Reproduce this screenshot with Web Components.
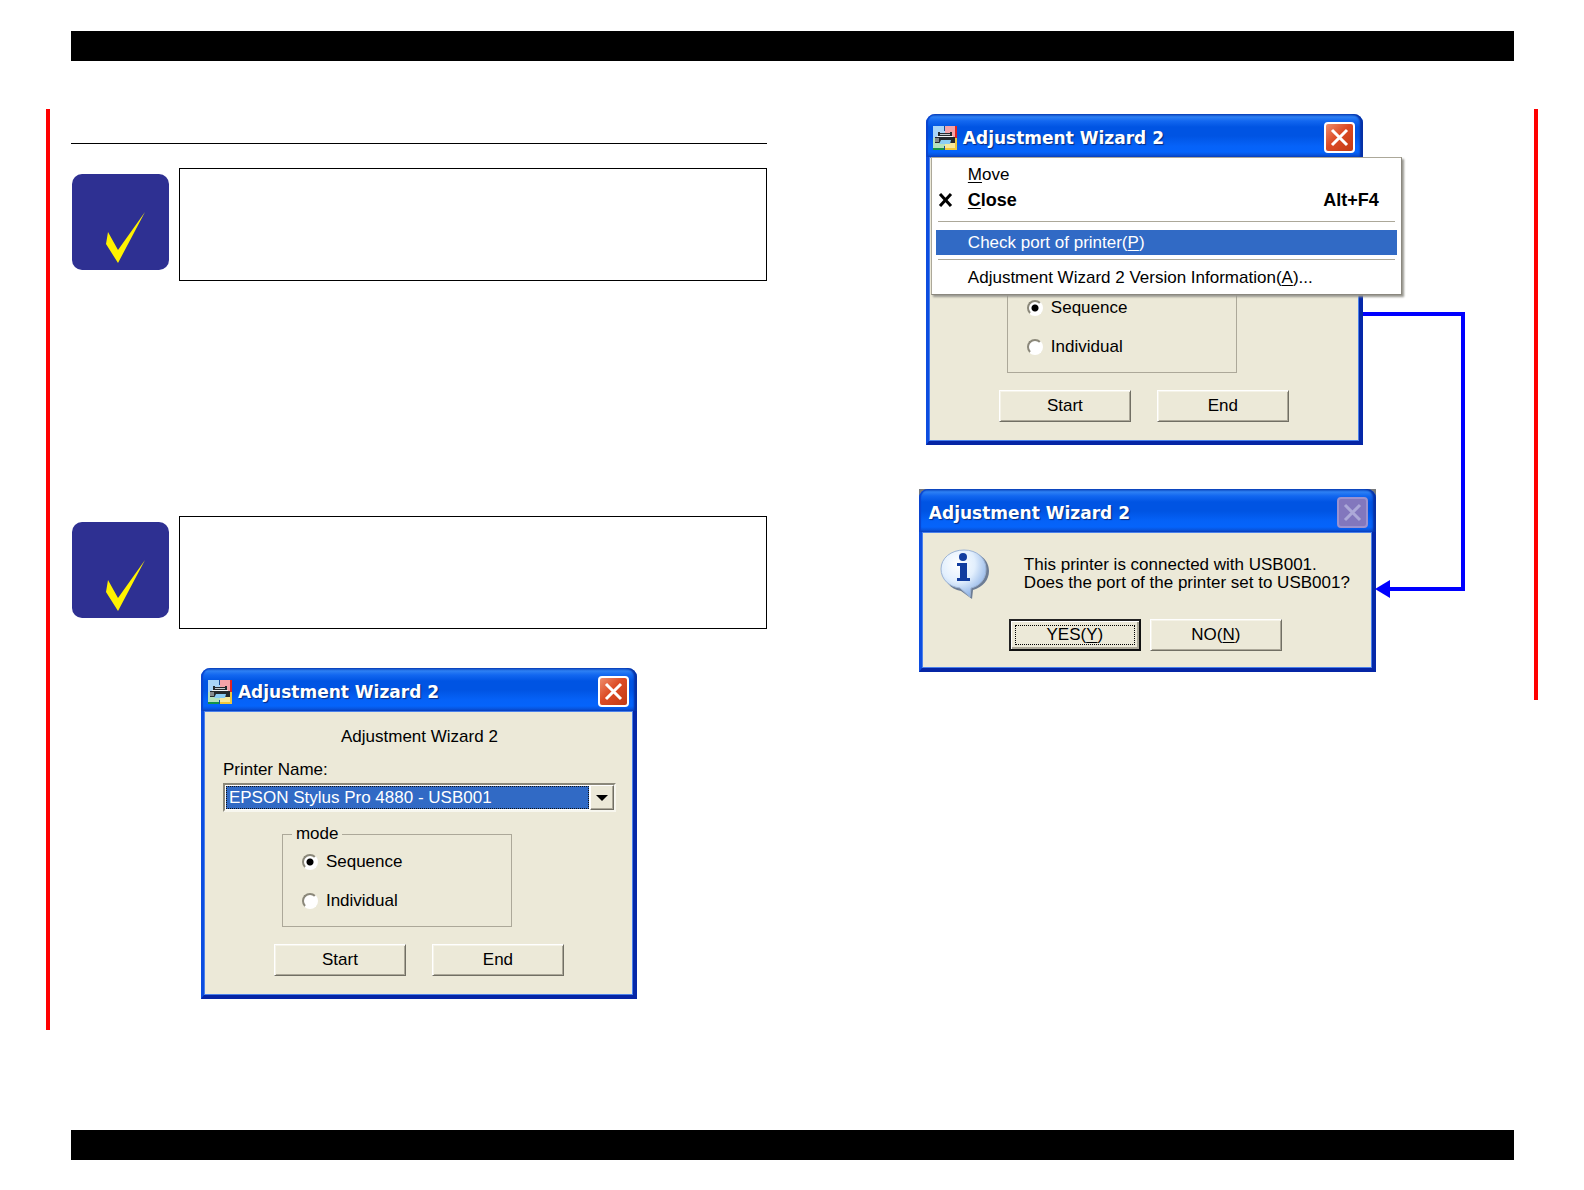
<!DOCTYPE html>
<html lang="en">
<head>
<meta charset="utf-8">
<title>Adjustment Wizard 2</title>
<style>
  body { margin: 0; background: #fff; color: #000; font: 17px/20px "Liberation Sans", Arial, sans-serif; }
</style>
</head>
<body>
<manual-page></manual-page>

<template id="t-page">
  <style>
    :host { display: flex; flex-direction: column; min-height: 100vh; }
    .band { height: 30px; background: #000; margin: 31px 70px 0 71px; }
    .band.end { margin: auto 70px 30px 71px; }
    main { display: grid; grid-template-columns: 717fr 767fr; align-items: start; padding: 48px 46px 0; }
    .left { border-left: 4px solid #f00; padding: 34px 0 31px 21px; display: flex; flex-direction: column; }
    .right { border-right: 4px solid #f00; padding: 5px 0 28px 152px; }
    hr { border: 0; height: 1px; background: #000; margin: 0 0 24px; width: 100%; }
    .left manual-note + manual-note { margin-top: 235px; }
    .left xp-window { align-self: center; width: 436px; margin-top: 39px; }
    .flow { position: relative; width: 457px; display: flex; flex-direction: column; gap: 44px; }
    .flow .parent { width: 437px; margin-left: 7px; }
    .link { position: absolute; left: 444px; top: 198px; }
    system-menu { position: absolute; left: 5px; top: 43px; }
  </style>
  <header class="band"></header>
  <main>
    <section class="left">
      <hr>
      <manual-note></manual-note>
      <manual-note></manual-note>
      <xp-window><app-icon slot="icon"></app-icon><span slot="title">Adjustment Wizard 2</span><wizard-form></wizard-form></xp-window>
    </section>
    <section class="right">
      <div class="flow">
        <xp-window class="parent"><app-icon slot="icon"></app-icon><span slot="title">Adjustment Wizard 2</span><wizard-form covered></wizard-form><system-menu></system-menu></xp-window>
        <xp-window inactive><span slot="title">Adjustment Wizard 2</span><port-message></port-message></xp-window>
        <svg class="link" width="102" height="287" viewBox="0 0 102 287" aria-hidden="true">
          <path d="M0 2H100V277H26" fill="none" stroke="#00f" stroke-width="4"/>
          <path d="M12 277L27 268V286Z" fill="#00f"/>
        </svg>
      </div>
    </section>
  </main>
  <footer class="band end"></footer>
</template>

<template id="t-note">
  <style>
    :host { display: flex; gap: 10px; padding-left: 1px; }
    svg { margin-top: 6px; flex: none; }
    .frame { flex: 1; min-height: 111px; border: 1px solid #000; }
  </style>
  <svg width="97" height="96" viewBox="0 0 97 96" aria-hidden="true">
    <rect width="97" height="96" rx="10" fill="#2e3092"/>
    <path d="M36 58L46 76L73 38L46 89L34 70Z" fill="#fff200"/>
  </svg>
  <div class="frame"></div>
</template>

<template id="t-icon">
  <style>:host { display: block; width: 24px; height: 24px; } svg { display: block; }</style>
  <svg width="24" height="24" viewBox="0 0 24 24" aria-hidden="true">
    <path d="M0 0H12V12H0Z" fill="#a9d5f7"/><path d="M12 0H24V12H12Z" fill="#f5a3a8"/>
    <path d="M0 12H12V24H0Z" fill="#b5e2bd"/><path d="M12 12H24V24H12Z" fill="#f7e99b"/>
    <path d="M23 0V12" stroke="#e02420" stroke-width="2"/><path d="M0 23H12" stroke="#159447" stroke-width="2"/>
    <path d="M12 23H24M23 12V24" stroke="#efc83b" stroke-width="2"/><path d="M11.500 0V5M11.500 20V24" stroke="#174c96" stroke-width="1"/>
    <path d="M5 6H7V7H17V6H19V10H5Z" fill="#242a2e"/><path d="M7 8H17V9H7Z" fill="#c3cacd"/>
    <path d="M4 10H20V11H4Z" fill="#eef2f3"/>
    <path d="M2 11H22V17H2Z" fill="#24292c"/><path d="M2 12H6V16H2Z" fill="#858b8e"/>
    <path d="M8 14H18L17 18H6Z" fill="#8bcdf4"/>
  </svg>
</template>

<template id="t-window">
  <style>
    :host { display: block; position: relative; }
    :host([inactive]) { background: #77797c; }
    .bar { display: flex; align-items: center; box-sizing: border-box; height: 43px; padding: 4px 8px 0 7px; border-radius: 9px 9px 0 0;
      background: linear-gradient(#0c48bd 0, #2d80f4 3px, #1267f0 7px, #0054e3 13px, #0054e3 22px, #0562f8 32px, #0564fb 38px, #0a49c8 43px);
      box-shadow: inset 2px 0 1px #0a44cf, inset -3px 0 2px #0630a4; }
    h2 { flex: 1; margin: 0 0 0 6px; color: #fff; font: bold 17px/24px "DejaVu Sans", sans-serif; text-shadow: 1px 1px 1px #072a80; }
    :host([inactive]) h2 { margin-left: 3px; }
    .bar button { box-sizing: border-box; width: 31px; height: 31px; padding: 0; border: 2px solid #fff; border-radius: 4px; background: linear-gradient(135deg, #ee8d6d, #dc4b25 45%, #c23a14); }
    :host([inactive]) .bar button { background: #8277bd; border-color: #9b92cf; }
    .bar svg { display: block; margin: auto; stroke: #fff; }
    :host([inactive]) .bar svg { stroke: #aca9d8; }
    .body { border: solid #0831c4; border-width: 0 4px 4px 3px; border-left-color: #0c4de0; border-right-color: #0528a8; border-bottom-color: #0525a5; }
    .inner { border: 1px solid #4a80ea; background: #ece9d8; }
  </style>
  <div class="bar"><slot name="icon"></slot><h2><slot name="title"></slot></h2>
    <button type="button" aria-label="Close"><svg width="21" height="21" viewBox="0 0 21 21"><path d="M3 3L18 18M18 3L3 18" fill="none" stroke-width="3"/></svg></button></div>
  <div class="body"><div class="inner"><slot></slot></div></div>
</template>

<template id="t-button">
  <style>
    :host { display: block; }
    button { display: flex; align-items: center; justify-content: center; box-sizing: border-box; width: 132px; height: 32px; padding: 0; font: inherit; color: #000; background: #ece9d8;
      border: 1px solid; border-color: #fff #716f64 #716f64 #fff; box-shadow: inset 1px 1px #f5f3e8, inset -1px -1px #aca899; }
    :host([default]) button { border: 2px solid #000; border-color: #222 #111 #111 #222; box-shadow: inset 1px 1px #fff, inset -2px -2px #aca899; outline: 1px dotted #000; outline-offset: -7px; }
  </style>
  <button type="button"><span><slot></slot></span></button>
</template>

<template id="t-form">
  <style>
    :host { display: block; }
    form { display: flex; flex-direction: column; height: 282px; box-sizing: border-box; padding: 15px 16px 0 18px; }
    h3 { margin: 0; font: inherit; text-align: center; }
    .name { margin-top: 13px; }
    .combo { display: flex; box-sizing: border-box; height: 29px; border: 2px solid; border-color: #8b887a #f7f6ee #f7f6ee #8b887a; background: #fff; margin-top: 3px; }
    select { appearance: none; flex: 1; min-width: 0; margin: 1px; padding: 0 0 0 2px; border: 1px dotted #111; border-radius: 0; background: #316ac5; color: #fff; font: inherit; }
    .drop { width: 24px; display: grid; place-items: center; box-sizing: border-box; border: 1px solid; border-color: #fff #716f64 #716f64 #fff; box-shadow: inset -1px -1px #aca899; background: #ece9d8; }
    fieldset { box-sizing: border-box; width: 230px; height: 103px; margin: 12px 0 0 59px; padding: 8px 0 0 19px; border: 1px solid #aca899; }
    legend { padding: 0 4px; margin-left: -10px; }
    label.opt { display: flex; align-items: center; gap: 8px; height: 20px; }
    label.opt + label.opt { margin-top: 19px; }
    input { appearance: none; box-sizing: border-box; width: 16px; height: 16px; margin: 0; border: 2px solid; border-color: #8b887a #fff #fff #8b887a; border-radius: 50%; background: #fff; }
    input:checked { background: radial-gradient(circle, #000 0 3px, #fff 4px); }
    .actions { display: flex; gap: 26px; margin: 17px 0 0 51px; }
    :host([covered]) .top, :host([covered]) legend { visibility: hidden; }
  </style>
  <form>
    <div class="top"><h3>Adjustment Wizard 2</h3></div>
    <label class="name top" for="printer">Printer Name:</label>
    <div class="combo top"><select id="printer"><option>EPSON Stylus Pro 4880 - USB001</option></select>
      <span class="drop"><svg width="12" height="6" aria-hidden="true"><path d="M0 0H12L6 6Z"/></svg></span></div>
    <fieldset><legend>mode</legend>
      <label class="opt" for="seq"><input id="seq" type="radio" name="mode" checked>Sequence</label>
      <label class="opt" for="ind"><input id="ind" type="radio" name="mode">Individual</label>
    </fieldset>
    <div class="actions"><xp-button>Start</xp-button><xp-button>End</xp-button></div>
  </form>
</template>

<template id="t-menu">
  <style>
    :host { display: block; box-sizing: border-box; width: 471px; padding: 4px; background: #fff; border: 1px solid #aca899; border-right-color: #8b887f; border-bottom-color: #8b887f; box-shadow: 2px 2px 2px #999890; }
    button { display: flex; align-items: center; box-sizing: border-box; width: 100%; height: 25px; padding: 0 18px 0 0; border: 0; background: none; color: #000; font: inherit; text-align: left; white-space: nowrap; }
    .mark { width: 32px; flex: none; }
    .mark svg { display: block; margin-left: 2px; }
    .key { margin-left: auto; }
    .strong { font-size: 18px; font-weight: bold; }
    .on { background: #316ac5; color: #fff; }
    hr { border: 0; height: 1px; background: #aca899; margin: 4px 2px 5px; }
    hr.wide { margin-top: 9px; margin-bottom: 8px; }
    u { text-underline-offset: 2px; }
  </style>
  <div role="menu">
    <button type="button" role="menuitem"><span class="mark"></span><span><u>M</u>ove</span></button>
    <button type="button" role="menuitem" class="strong"><span class="mark"><svg width="15" height="14" viewBox="0 0 15 14"><path d="M2 1L13 13M13 1L2 13" stroke="#000" stroke-width="3"/></svg></span><span><u>C</u>lose</span><span class="key">Alt+F4</span></button>
    <hr class="wide">
    <button type="button" role="menuitem" class="on"><span class="mark"></span><span>Check port of printer(<u>P</u>)</span></button>
    <hr>
    <button type="button" role="menuitem"><span class="mark"></span><span>Adjustment Wizard 2 Version Information(<u>A</u>)...</span></button>
  </div>
</template>

<template id="t-message">
  <style>
    :host { display: flex; flex-direction: column; box-sizing: border-box; height: 134px; padding: 14px 0 0 17px; }
    .row { display: flex; gap: 34px; }
    p { margin: 9px 0 0; line-height: 18px; white-space: nowrap; }
    .actions { display: flex; gap: 9px; margin: 20px 0 0 69px; }
    u { text-underline-offset: 2px; }
  </style>
  <div class="row">
    <svg width="50" height="52" viewBox="0 0 50 52" aria-hidden="true">
      <defs><radialGradient id="g" cx=".38" cy=".3" r=".75"><stop offset="0" stop-color="#fff"/><stop offset=".5" stop-color="#e2effd"/><stop offset="1" stop-color="#86ade5"/></radialGradient></defs>
      <path d="M27 5C40 5 49 13 49 24C49 33 43 40 33 43L32 52L21 44C10 42 4 34 4 24C4 13 14 5 27 5Z" fill="#42577d" opacity=".75"/>
      <path d="M24 3C37 3 46 11 46 22C46 32 40 39 31 41L30 50L20 41C9 40 1 32 1 22C1 11 11 3 24 3Z" fill="url(#g)" stroke="#9db4d5"/>
      <circle cx="23" cy="10" r="4" fill="#123d9f"/>
      <path d="M17 16H27V31H30V34H17V31H20V19H17Z" fill="#123d9f"/>
    </svg>
    <p>This printer is connected with USB001.<br>Does the port of the printer set to USB001?</p>
  </div>
  <div class="actions"><xp-button default>YES(<u>Y</u>)</xp-button><xp-button>NO(<u>N</u>)</xp-button></div>
</template>

<script>
  function shadowFrom(host, id) {
    host.attachShadow({ mode: "open" }).append(document.getElementById(id).content.cloneNode(true));
  }
  class ManualNote extends HTMLElement { constructor() { super(); shadowFrom(this, "t-note"); } }
  class AppIcon extends HTMLElement { constructor() { super(); shadowFrom(this, "t-icon"); } }
  class XpWindow extends HTMLElement { constructor() { super(); shadowFrom(this, "t-window"); } }
  class XpButton extends HTMLElement { constructor() { super(); shadowFrom(this, "t-button"); } }
  class WizardForm extends HTMLElement { constructor() { super(); shadowFrom(this, "t-form"); } }
  class SystemMenu extends HTMLElement { constructor() { super(); shadowFrom(this, "t-menu"); } }
  class PortMessage extends HTMLElement { constructor() { super(); shadowFrom(this, "t-message"); } }
  class ManualPage extends HTMLElement { constructor() { super(); shadowFrom(this, "t-page"); } }
  customElements.define("manual-note", ManualNote);
  customElements.define("app-icon", AppIcon);
  customElements.define("xp-button", XpButton);
  customElements.define("xp-window", XpWindow);
  customElements.define("wizard-form", WizardForm);
  customElements.define("system-menu", SystemMenu);
  customElements.define("port-message", PortMessage);
  customElements.define("manual-page", ManualPage);
</script>
</body>
</html>
